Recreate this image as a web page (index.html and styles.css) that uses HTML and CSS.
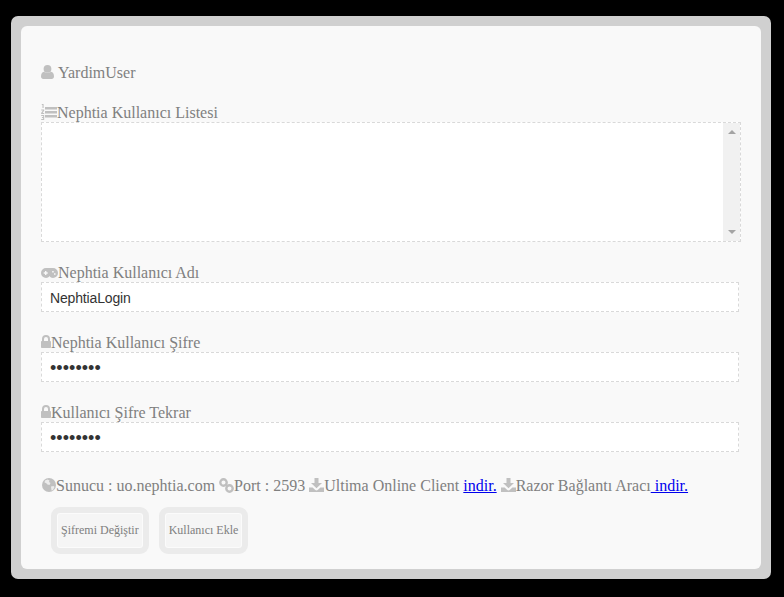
FILE: index.html
```html
<!DOCTYPE html>
<html lang="tr">
<head>
<meta charset="utf-8">
<title>Nephtia</title>
<link rel="stylesheet" href="styles.css">
</head>
<body>
<main class="frame">
  <form class="panel">
    <div class="user-line">
      <svg class="icon user" viewBox="0 0 13 14"><circle cx="6.5" cy="3.900" r="3.900"/><path d="M0 11.600C0 8.800 1 7 3 6.800c1 .9 2.200 1.300 3.500 1.300S9 7.700 10 6.800c2 .2 3 2 3 4.800C13 13.100 12 14 10.800 14H2.200C1 14 0 13.100 0 11.600z"/></svg>
      <span>YardimUser</span>
    </div>
    <div class="field list-field">
      <label class="label"><svg class="icon list" viewBox="0 0 16 16"><path d="M4 3h12v2.500H4zM4 7h12v2.500H4zM4 11h12v2.500H4z"/><path d="M.8 0h1.800v4H1.500V1H.8zM.2 5.500h3v1L1.700 9H3.200v1H.1V9l1.800-2.500H.2zM.2 11h3v5H.2v-.9h1.900v-1.100H.9v-.9h1.200v-1.200H.2z"/></svg>Nephtia Kullanıcı Listesi</label>
      <div class="listbox">
        <div class="list-body"></div>
        <div class="scroll"><i class="arrow up"></i><i class="arrow down"></i></div>
      </div>
    </div>
    <div class="field">
      <label class="label"><svg class="icon pad" viewBox="0 0 17 10"><path d="M5 0h7a5 5 0 0 1 0 10c-1.600 0-2.600-.7-3.300-1.700H8.300C7.600 9.300 6.600 10 5 10A5 5 0 0 1 5 0z"/><path fill="#f9f9f9" d="M4 3h1.400v1.300h1.300v1.400H5.400V7H4V5.700H2.700V4.300H4zM11.200 3.100h1.500v1.500h-1.500zM13 5.200h1.500v1.500H13z"/></svg>Nephtia Kullanıcı Adı</label>
      <input class="text-input" type="text" value="NephtiaLogin">
    </div>
    <div class="field">
      <label class="label"><svg class="icon lock" viewBox="0 0 10 13"><path d="M1 6V4a4 4 0 0 1 8 0v2h.2c.4 0 .8.400.8.800v5.400c0 .4-.4.800-.8.800H.8c-.4 0-.8-.4-.8-.8V6.800C0 6.400.4 6 .8 6zm2 0h4V4a2 2 0 0 0-4 0z"/></svg>Nephtia Kullanıcı Şifre</label>
      <input class="text-input secret" type="password" value="password">
    </div>
    <div class="field">
      <label class="label"><svg class="icon lock" viewBox="0 0 10 13"><path d="M1 6V4a4 4 0 0 1 8 0v2h.2c.4 0 .8.400.8.800v5.400c0 .4-.4.800-.8.800H.8c-.4 0-.8-.4-.8-.8V6.800C0 6.400.4 6 .8 6zm2 0h4V4a2 2 0 0 0-4 0z"/></svg>Kullanıcı Şifre Tekrar</label>
      <input class="text-input secret" type="password" value="password">
    </div>
    <p class="info">
      <svg class="icon globe" viewBox="0 0 15 14"><circle cx="8" cy="7" r="7"/><path fill="#ececec" d="M4 2.500l2.500-1 2 1-.5 1.500 1.500 1-1 2-2-.5-1.500-1.500-1.500-.5zM10 8.500l2.500-.5 1 1-1.500 3-1.500.5z"/></svg>Sunucu : uo.nephtia.com
      <svg class="icon link" viewBox="0 0 15 15"><circle cx="4.500" cy="4.500" r="3.200"/><circle cx="10.500" cy="10.500" r="3.200"/><path d="M6.500 6.500l2 2"/></svg>Port : 2593
      <svg class="icon dl" viewBox="0 0 15 14"><path d="M5.500 0h4v5H13L7.500 10.300 2 5h3.500z"/><path d="M0 9.500h3.600l2.700 2.600c.7.600 1.700.6 2.400 0l2.700-2.600H15V14H0z"/></svg>Ultima Online Client <a href="#">indir.</a>
      <svg class="icon dl" viewBox="0 0 15 14"><path d="M5.500 0h4v5H13L7.500 10.300 2 5h3.500z"/><path d="M0 9.500h3.600l2.700 2.600c.7.600 1.700.6 2.400 0l2.700-2.600H15V14H0z"/></svg>Razor Bağlantı Aracı<a href="#"> indir.</a>
    </p>
    <div class="actions">
      <button class="btn" type="button">Şifremi Değiştir</button>
      <button class="btn" type="button">Kullanıcı Ekle</button>
    </div>
  </form>
</main>
</body>
</html>
```
FILE: styles.css
```css
* { box-sizing: border-box; }
html, body { margin: 0; height: 100%; background: #000; overflow: hidden; }
body { padding: 16px 13px 18px 11px; font-family: "Liberation Serif", serif; font-size: 16px; color: #808080; }
.frame { height: 563px; padding: 10px; background: #d0d0d0; border-radius: 7px; }
.panel { height: 100%; background: #f9f9f9; border-radius: 6px; padding: 38px 20px 0; }
.icon { fill: #c0c0c0; }
.user-line { display: flex; align-items: center; gap: 4px; height: 18px; }
.user { width: 13px; height: 14px; margin-bottom: 2px; }
.field { display: flex; flex-direction: column; align-items: flex-start; }
.list-field { margin-top: 22px; }
.label { display: block; height: 18px; line-height: 18px; white-space: nowrap; }
.list { width: 16px; height: 16px; vertical-align: -2px; }
.pad { width: 17px; height: 10px; }
.lock { width: 10px; height: 13px; }
.listbox { display: flex; width: 700px; height: 120px; border: 1px dashed #d9d9d9; background: #fff; }
.list-body { flex: 1; }
.scroll { width: 17px; background: #f1f1f1; display: flex; flex-direction: column; justify-content: space-between; align-items: center; padding: 7px 0; }
.arrow { width: 0; height: 0; border-left: 4px solid transparent; border-right: 4px solid transparent; }
.up { border-bottom: 4px solid #a3a3a3; }
.down { border-top: 4px solid #a3a3a3; }
.field + .field { margin-top: 22px; }
.text-input { width: 698px; height: 30px; border: 1px dashed #d9d9d9; background: #fff; padding: 2px 8px 0; margin: 0; font-family: "Liberation Sans", sans-serif; font-size: 14px; letter-spacing: -.15px; color: #333; outline: none; border-radius: 0; }
.secret { font-size: 18px; letter-spacing: .05px; padding-top: 3px; }
.info { margin: 25px 0 0; line-height: 18px; white-space: nowrap; }
.globe { width: 15px; height: 14px; vertical-align: -1px; }
.link { width: 15px; height: 15px; vertical-align: -2px; fill: none; stroke: #c0c0c0; stroke-width: 2.400; }
.dl { width: 15px; height: 14px; vertical-align: -1px; }
a { color: #00e; }
.actions { display: flex; gap: 10px; margin: 12px 0 0 10px; }
.btn { height: 47px; padding: 0 4px; border: 6px solid #ebebeb; border-radius: 9px; background: #f5f5f5; background-clip: padding-box; box-shadow: inset 0 0 0 1px #fbfbfb; font-family: "Liberation Serif", serif; font-size: 12px; color: #808080; }
```
